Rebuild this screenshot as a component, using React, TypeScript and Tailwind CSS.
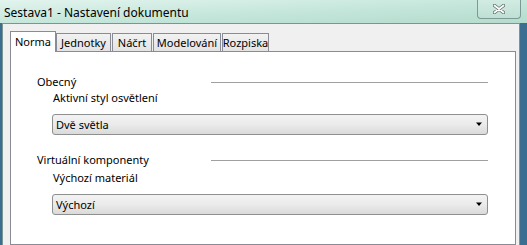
const font = "font-['Segoe_UI','Noto_Sans','Liberation_Sans',sans-serif]";

function Tab({ label, active, w }: { label: string; active?: boolean; w: string }) {
    if (active) {
        return (
            <div
                className={`${w} h-[21px] bg-white border border-b-0 border-[#898c95] flex items-center justify-center text-[11px] leading-[16px] text-black relative z-10 -mb-px`}
            >
                {label}
            </div>
        );
    }
    return (
        <div
            className={`${w} h-[18px] bg-gradient-to-b from-[#f2f2f2] to-[#e3e3e3] border border-b-0 border-[#898c95] flex items-center justify-center text-[11px] leading-[16px] text-black`}
        >
            {label}
        </div>
    );
}

function Combo({ value }: { value: string }) {
    return (
        <div className="ml-[15px] h-[21px] rounded-[3px] border border-[#8e8f8f] bg-gradient-to-b from-[#f3f3f3] via-[#ebebeb] to-[#dadada] flex items-center pl-[3px] pr-[4px]">
            <span className="text-[11px] leading-[16px] text-black">{value}</span>
            <svg className="ml-auto" width="8" height="5" viewBox="0 0 8 5">
                <path d="M1 0.5 L7 0.5 L4 4 Z" fill="#000" />
            </svg>
        </div>
    );
}

function Group({ title }: { title: string }) {
    return (
        <div className="flex items-center h-[16px]">
            <span className="w-[174px] text-[11px] leading-[16px] text-black">{title}</span>
            <div className="flex-1 h-px bg-[#a0a0a0]" />
        </div>
    );
}

export default function App() {
    return (
        <div className={`w-[527px] h-[245px] flex flex-col overflow-hidden bg-[#3c6e91] ${font}`}>
            {/* title bar */}
            <div className="h-[23px] flex items-start bg-gradient-to-br from-[#e2f4ee] via-[#c6e7dc] to-[#b4dccd]">
                <span className="pl-[4px] pt-[4px] text-[12px] leading-[18px] text-black">
                    Sestava1 - Nastavení dokumentu
                </span>
                <div className="ml-auto mr-[6px] w-[44px] h-[19px] rounded-b-[4px] border border-t-0 border-[#7c9a93] bg-gradient-to-b from-[#d2ece3] to-[#bfe0d4] flex items-center justify-center">
                    <svg width="12" height="10" viewBox="0 0 12 10">
                        <path
                            d="M1.5 1.5 L10.5 8.5 M10.5 1.5 L1.5 8.5"
                            stroke="#5a6a6a"
                            strokeWidth="3.4"
                            strokeLinecap="round"
                        />
                        <path
                            d="M1.5 1.5 L10.5 8.5 M10.5 1.5 L1.5 8.5"
                            stroke="#ffffff"
                            strokeWidth="1.8"
                            strokeLinecap="round"
                        />
                    </svg>
                </div>
            </div>

            {/* client area */}
            <div className="flex-1 flex flex-col ml-[2px] mr-[7px] bg-[#f0f0f0] border-t border-l border-r border-[#7d9590] pl-[7px] pr-[3px] pt-[7px]">
                <div className="flex items-end">
                    <Tab label="Norma" active w="w-[46px]" />
                    <Tab label="Jednotky" w="w-[55px]" />
                    <div className="w-px" />
                    <Tab label="Náčrt" w="w-[40px]" />
                    <div className="w-px" />
                    <Tab label="Modelování" w="w-[68px]" />
                    <div className="w-px" />
                    <Tab label="Rozpiska" w="w-[47px]" />
                </div>
                <div className="flex-1 bg-white border border-[#898c95] pl-[26px] pr-[27px] pt-[22px]">
                    <Group title="Obecný" />
                    <div className="ml-[16px] text-[11px] leading-[16px] text-black">
                        Aktivní styl osvětlení
                    </div>
                    <div className="mt-[8px]">
                        <Combo value="Dvě světla" />
                    </div>
                    <div className="mt-[17px]">
                        <Group title="Virtuální komponenty" />
                    </div>
                    <div className="mt-[2px] ml-[16px] text-[11px] leading-[16px] text-black">
                        Výchozí materiál
                    </div>
                    <div className="mt-[8px]">
                        <Combo value="Výchozí" />
                    </div>
                </div>
            </div>
        </div>
    );
}
